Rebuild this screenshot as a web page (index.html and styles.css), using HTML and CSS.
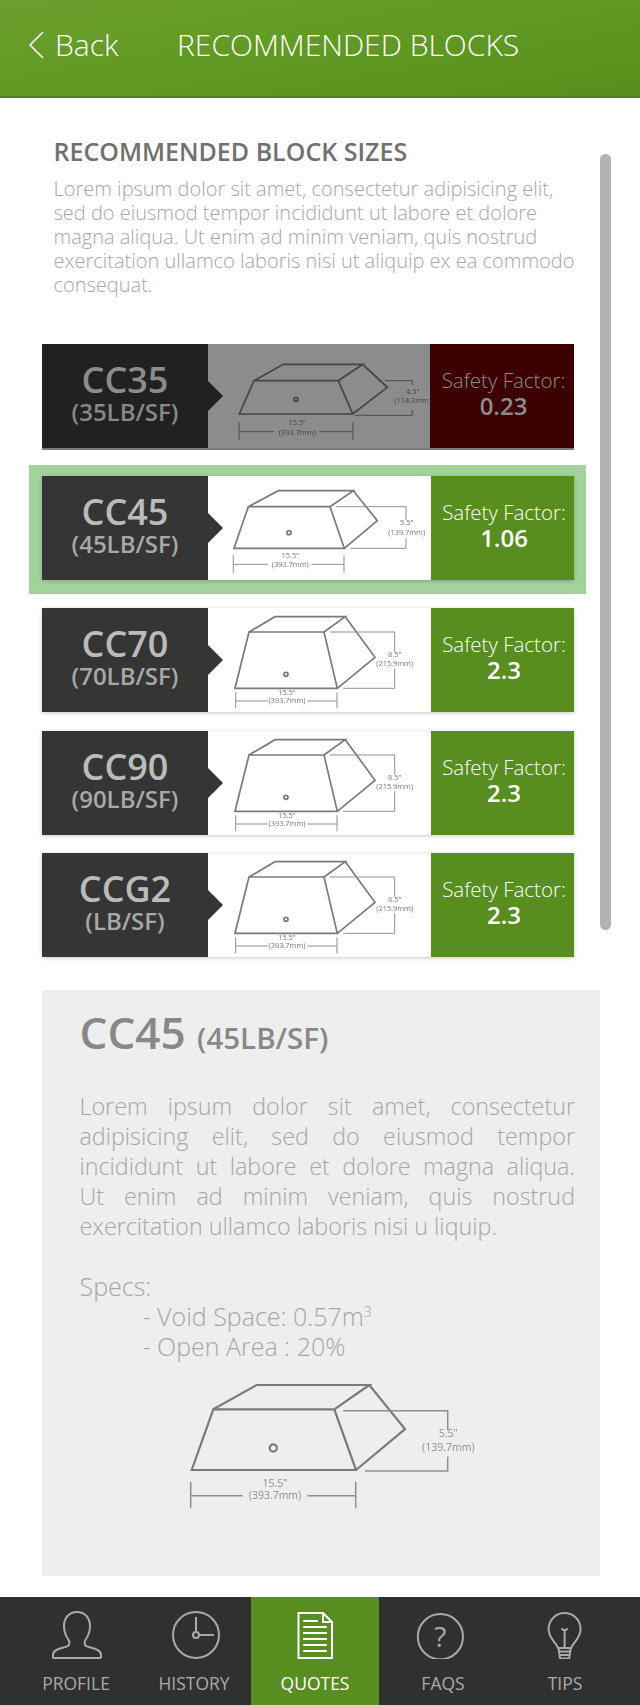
FILE: index.html
```html
<!DOCTYPE html>
<html lang="en">
<head>
<meta charset="utf-8">
<title>Recommended Blocks</title>
<link rel="stylesheet" href="styles.css">
</head>
<body>
<div class="app">
  <header class="topbar">
    <svg class="chevron" viewBox="0 0 16 28" width="16" height="28"><path d="M15 1 L2 14 L15 27"/></svg>
    <span class="back">Back</span>
    <h1 class="topbar-title">RECOMMENDED BLOCKS</h1>
  </header>

  <main class="content">
    <div class="scrollbar"></div>
    <h2 class="intro-title">RECOMMENDED BLOCK SIZES</h2>
    <p class="intro-text">Lorem ipsum dolor sit amet, consectetur adipisicing elit, sed do eiusmod tempor incididunt ut labore et dolore magna aliqua. Ut enim ad minim veniam, quis nostrud exercitation ullamco laboris nisi ut aliquip ex ea commodo consequat.</p>

    <section class="rows">
      <article class="row row--unsafe">
        <div class="row-name"><span class="row-code">CC35</span><span class="row-weight">(35LB/SF)</span></div>
        <div class="row-figure">
          <svg class="fig" viewBox="0 0 225 104" width="225" height="104">
            <path class="fig-line" d="M28.3 70 L43 36.7 H127.3 L141.7 70 Z M43 36.7 L72.3 20.3 H151.7 L127.3 36.7 M151.7 20.3 L176.3 43.3 L141.7 70"/>
            <circle class="fig-line" cx="85" cy="55.3" r="2"/>
            <path class="fig-dim" d="M174 36.7 H201.3 V41 M201.3 66 V71.3 H144 M28 78.3 V96 M142 78.3 V96 M28 87.7 H63 M108.3 87.7 H142"/>
            <text class="fig-text" x="86.3" y="81">15.5"</text>
            <text class="fig-text" x="86.3" y="91">(393.7mm)</text>
            <text class="fig-text" x="201.7" y="50">4.5"</text>
            <text class="fig-text" x="201.7" y="59.3">(114.3mm)</text>
          </svg>
        </div>
        <div class="row-score"><span class="score-label">Safety Factor:</span><span class="score-value">0.23</span></div>
      </article>

      <div class="row-selected">
        <article class="row">
          <div class="row-name"><span class="row-code">CC45</span><span class="row-weight">(45LB/SF)</span></div>
          <div class="row-figure">
            <svg class="fig" viewBox="0 0 225 104" width="225" height="104">
              <path class="fig-line" d="M23 72.3 L37.3 30.7 H119 L133.3 72.3 Z M37.3 30.7 L67.3 14.7 H142.3 L119 30.7 M142.3 14.7 L166.3 44.7 L133.3 72.3"/>
              <circle class="fig-line" cx="78" cy="56.7" r="2"/>
              <path class="fig-dim" d="M125 30.7 H195 V44 M195 62 V72.3 H139.7 M22.3 79 V96.7 M133 79 V96.7 M22.3 88.3 H57.3 M100.7 88.3 H133"/>
              <text class="fig-text" x="79.3" y="82">15.5"</text>
              <text class="fig-text" x="79.3" y="91">(393.7mm)</text>
              <text class="fig-text" x="195.7" y="49">5.5"</text>
              <text class="fig-text" x="195.7" y="58.7">(139.7mm)</text>
            </svg>
          </div>
          <div class="row-score"><span class="score-label">Safety Factor:</span><span class="score-value">1.06</span></div>
        </article>
      </div>

      <article class="row">
        <div class="row-name"><span class="row-code">CC70</span><span class="row-weight">(70LB/SF)</span></div>
        <div class="row-figure">
          <svg class="fig" viewBox="0 0 225 104" width="225" height="104">
            <path class="fig-line" d="M24 80.3 L38 24 H113 L126.3 80.3 Z M38 24 L64 8.7 H134.3 L113 24 M134.3 8.7 L164 49.3 L126.3 80.3"/>
            <circle class="fig-line" cx="75" cy="66.3" r="2"/>
            <path class="fig-dim" d="M119 24 H183.7 V43.7 M183.7 60.3 V80.3 H132.3 M24.7 84.3 V100.3 M126 84.3 V100.3 M24.7 93 H56.7 M96.3 93 H126"/>
            <text class="fig-text" x="76" y="87">15.5"</text>
            <text class="fig-text" x="76" y="95.3">(393.7mm)</text>
            <text class="fig-text" x="183.7" y="49.3">8.5"</text>
            <text class="fig-text" x="183.7" y="57.7">(215.9mm)</text>
          </svg>
        </div>
        <div class="row-score"><span class="score-label">Safety Factor:</span><span class="score-value">2.3</span></div>
      </article>

      <article class="row row--offset">
        <div class="row-name"><span class="row-code">CC90</span><span class="row-weight">(90LB/SF)</span></div>
        <div class="row-figure">
          <svg class="fig" viewBox="0 0 225 104" width="225" height="104">
            <path class="fig-line" d="M24 80.3 L38 24 H113 L126.3 80.3 Z M38 24 L64 8.7 H134.3 L113 24 M134.3 8.7 L164 49.3 L126.3 80.3"/>
            <circle class="fig-line" cx="75" cy="66.3" r="2"/>
            <path class="fig-dim" d="M119 24 H183.7 V43.7 M183.7 60.3 V80.3 H132.3 M24.7 84.3 V100.3 M126 84.3 V100.3 M24.7 93 H56.7 M96.3 93 H126"/>
            <text class="fig-text" x="76" y="87">15.5"</text>
            <text class="fig-text" x="76" y="95.3">(393.7mm)</text>
            <text class="fig-text" x="183.7" y="49.3">8.5"</text>
            <text class="fig-text" x="183.7" y="57.7">(215.9mm)</text>
          </svg>
        </div>
        <div class="row-score"><span class="score-label">Safety Factor:</span><span class="score-value">2.3</span></div>
      </article>

      <article class="row">
        <div class="row-name"><span class="row-code">CCG2</span><span class="row-weight">(LB/SF)</span></div>
        <div class="row-figure">
          <svg class="fig" viewBox="0 0 225 104" width="225" height="104">
            <path class="fig-line" d="M24 80.3 L38 24 H113 L126.3 80.3 Z M38 24 L64 8.7 H134.3 L113 24 M134.3 8.7 L164 49.3 L126.3 80.3"/>
            <circle class="fig-line" cx="75" cy="66.3" r="2"/>
            <path class="fig-dim" d="M119 24 H183.7 V43.7 M183.7 60.3 V80.3 H132.3 M24.7 84.3 V100.3 M126 84.3 V100.3 M24.7 93 H56.7 M96.3 93 H126"/>
            <text class="fig-text" x="76" y="87">15.5"</text>
            <text class="fig-text" x="76" y="95.3">(393.7mm)</text>
            <text class="fig-text" x="183.7" y="49.3">8.5"</text>
            <text class="fig-text" x="183.7" y="57.7">(215.9mm)</text>
          </svg>
        </div>
        <div class="row-score"><span class="score-label">Safety Factor:</span><span class="score-value">2.3</span></div>
      </article>
    </section>

    <section class="detail">
      <h3 class="detail-title">CC45 <small class="detail-weight">(45LB/SF)</small></h3>
      <p class="detail-text">
        <span class="detail-line">Lorem ipsum dolor sit amet, consectetur</span>
        <span class="detail-line">adipisicing elit, sed do eiusmod tempor</span>
        <span class="detail-line">incididunt ut labore et dolore magna aliqua.</span>
        <span class="detail-line">Ut enim ad minim veniam, quis nostrud</span>
        <span class="detail-line detail-line--last">exercitation ullamco laboris nisi u liquip.</span>
      </p>
      <div class="specs">
        <div>Specs:</div>
        <div class="spec-item">- Void Space: 0.57m<sup class="spec-sup">3</sup></div>
        <div class="spec-item">- Open Area : 20%</div>
      </div>
      <svg class="detail-fig" viewBox="0 0 300 140" width="300" height="140">
        <path class="fig-line fig-line--big" d="M11.7 95 L33.3 34.3 H154.3 L176 95 Z M33.3 34.3 L76.7 10 H189.3 L154.3 34.3 M189.3 10 L225 54 L176 95"/>
        <circle class="fig-line fig-line--big" cx="93.3" cy="73" r="3.6"/>
        <path class="fig-dim fig-dim--big" d="M163.3 35.7 H267.7 V55 M267.7 81.7 V96 H185 M10.7 106.7 V133.3 M175.7 106.7 V133.3 M10.7 120.7 H62.7 M127.3 120.7 H175.7"/>
        <text class="fig-text fig-text--big" x="95" y="111.7">15.5"</text>
        <text class="fig-text fig-text--big" x="95" y="124">(393.7mm)</text>
        <text class="fig-text fig-text--big" x="268.3" y="62">5.5"</text>
        <text class="fig-text fig-text--big" x="268.3" y="75.7">(139.7mm)</text>
      </svg>
    </section>
  </main>

  <nav class="tabbar">
    <a class="tab">
      <svg class="tab-icon" viewBox="0 0 60 48" width="60" height="48"><path d="M31 1 C23 1 18 7 18 15 C18 21 20 25 22 28 C24 31 24 33 22 35 C19 37 7 37 7 44 V46 Q7 47 8 47 H54 Q55 47 55 46 V44 C55 37 43 37 40 35 C38 33 38 31 40 28 C42 25 44 21 44 15 C44 7 39 1 31 1 Z"/></svg>
      <span class="tab-label">PROFILE</span>
    </a>
    <a class="tab">
      <svg class="tab-icon" viewBox="0 0 60 48" width="60" height="48"><circle cx="32" cy="24" r="23"/><circle cx="32" cy="24" r="3"/><path d="M32 6 V21 M35 24 H50"/></svg>
      <span class="tab-label">HISTORY</span>
    </a>
    <a class="tab tab--active">
      <svg class="tab-icon" viewBox="0 0 60 48" width="60" height="48"><path d="M13.5 2 H38 L47 11 V47 H13.5 Z M38 2 V11 H47 M18 10 H33 M18 16 H42 M18 22 H42 M18 28 H42 M18 34 H42 M18 40 H42"/></svg>
      <span class="tab-label">QUOTES</span>
    </a>
    <a class="tab">
      <svg class="tab-icon" viewBox="0 0 60 48" width="60" height="48"><circle cx="27.4" cy="25.7" r="22.6"/><text class="tab-glyph" x="27.4" y="36">?</text></svg>
      <span class="tab-label">FAQS</span>
    </a>
    <a class="tab">
      <svg class="tab-icon" viewBox="0 0 60 48" width="60" height="48"><path d="M23 37 C22 32 13.6 28 13.6 18 A16 16 0 0 1 45.6 18 C45.6 28 37.2 32 36.2 37 Z M23.5 37 L25 47.5 H34.2 L35.7 37 M24 40.5 H35 M24.6 44 H34.6 M29.6 37 V20 M26.5 17.5 Q29.6 21 32.7 17.5"/></svg>
      <span class="tab-label">TIPS</span>
    </a>
  </nav>
</div>
</body>
</html>
```

FILE: styles.css
```css
* { box-sizing: border-box; }
html, body { margin: 0; padding: 0; }
body {
  width: 640px;
  height: 1705px;
  overflow: hidden;
  background: #fff;
  font-family: "Open Sans", "Liberation Sans", sans-serif;
}
.app { display: flex; flex-direction: column; height: 1705px; }

/* top bar */
.topbar {
  flex: none;
  display: flex;
  align-items: center;
  height: 98px;
  padding: 0 0 7px 28px;
  background: linear-gradient(170deg, #6c9f2e 0%, #619a23 45%, #578f1c 100%);
  border-bottom: 2px solid #4c7f17;
  color: #fff;
}
.chevron { flex: none; fill: none; stroke: #fff; stroke-width: 1.6; }
.back { margin-left: 11px; width: 122px; font-size: 30px; font-weight: 300; line-height: 40px; }
.topbar-title { margin: 0; font-size: 30px; font-weight: 300; line-height: 40px; white-space: nowrap; }

/* main area */
.content { position: relative; flex: 1; padding: 38px 0 0 42px; }
.scrollbar {
  position: absolute;
  left: 600px;
  top: 56px;
  width: 11px;
  height: 776px;
  border-radius: 6px;
  background: #b2b2b2;
}
.intro-title {
  margin: 0 0 0 11.5px;
  font-size: 25px;
  font-weight: 600;
  line-height: 30px;
  color: #707070;
}
.intro-text {
  width: 530px;
  margin: 11px 0 47px 11.5px;
  font-size: 20px;
  font-weight: 300;
  line-height: 24px;
  color: #a6a6a6;
}

/* block rows */
.rows { display: flex; flex-direction: column; gap: 18px; width: 532px; }
.row {
  position: relative;
  display: flex;
  width: 532px;
  height: 104px;
  background: #fff;
  box-shadow: 0 1px 4px rgba(0, 0, 0, .22);
}
.row--offset { margin-top: 1px; }
.row-selected {
  margin: -1px -12px -4px -13px;
  padding: 11px 12px 14px 13px;
  background: #a2d39c;
}
.row-name {
  position: relative;
  flex: none;
  display: flex;
  flex-direction: column;
  align-items: center;
  width: 166px;
  padding-top: 22px;
  background: #353535;
}
.row-name::after {
  content: "";
  position: absolute;
  left: 100%;
  top: 37px;
  border-style: solid;
  border-width: 15px 0 15px 15px;
  border-color: transparent transparent transparent #353535;
}
.row-code { font-size: 36px; font-weight: 600; line-height: 28px; color: #bbb; }
.row-weight { margin-top: 4px; font-size: 24px; font-weight: 600; line-height: 28px; color: #a8a8a8; }
.row-figure { flex: 1; overflow: hidden; background: #fff; }
.fig { display: block; margin-left: 3px; filter: blur(.3px); }
.fig-line { fill: none; stroke: #7a7a7a; stroke-width: 1.7; }
.fig-dim { fill: none; stroke: #8f8f8f; stroke-width: 1; }
.fig-text { font-size: 7.4px; fill: #777; text-anchor: middle; }
.row-score {
  flex: none;
  display: flex;
  flex-direction: column;
  align-items: center;
  width: 143px;
  padding: 23px 0 0 3px;
  background: #578e1f;
  color: #fff;
}
.score-label { font-size: 20.5px; font-weight: 300; line-height: 27px; white-space: nowrap; }
.score-value { font-size: 24px; font-weight: 600; line-height: 24px; }

/* dimmed first row */
.row--unsafe { box-shadow: 0 2px 0 #7c7c7c; }
.row--unsafe .row-name { background: #212121; }
.row--unsafe .row-name::after { border-left-color: #212121; }
.row--unsafe .row-code { color: #8c8c8c; }
.row--unsafe .row-weight { color: #888; }
.row--unsafe .row-figure { background: #8c8c8c; }
.row--unsafe .fig-line { stroke: #444; }
.row--unsafe .fig-dim { stroke: #4a4a4a; }
.row--unsafe .fig-text { fill: #444; }
.row--unsafe .row-score { width: 144px; background: #3d0000; color: #8c8c8c; }

/* detail panel */
.detail {
  width: 558px;
  height: 586px;
  margin-top: 33px;
  padding: 12px 25px 0 37.5px;
  background: #eee;
}
.detail-title { margin: 0; font-size: 44px; font-weight: 600; line-height: 60px; color: #888; }
.detail-weight { font-size: 29.5px; font-weight: 600; line-height: 1; }
.detail-text {
  margin: 29px 0 30px;
  font-size: 23.3px;
  font-weight: 300;
  line-height: 30px;
  color: #a6a6a6;
}
.detail-line { display: block; text-align: justify; text-align-last: justify; white-space: nowrap; }
.detail-line--last { text-align-last: left; }
.specs { font-size: 25px; font-weight: 300; line-height: 30px; color: #a6a6a6; }
.spec-item { padding-left: 63px; }
.spec-sup { font-size: 14px; line-height: 0; }
.detail-fig { display: block; margin: 14px 0 0 100px; filter: blur(.3px); }
.fig-line--big { stroke-width: 2.2; }
.fig-dim--big { stroke-width: 1.5; }
.fig-text--big { font-size: 10.5px; fill: #8f8f8f; font-weight: 500; }

/* bottom tabs */
.tabbar {
  flex: none;
  display: grid;
  grid-template-columns: 122px 114px 128px 128px 116px;
  height: 108px;
  padding: 0 17px 0 15px;
  background: #303030;
}
.tab {
  display: flex;
  flex-direction: column;
  align-items: center;
  padding-top: 14px;
  color: #aaa;
}
.tab--active { background: #578e1f; color: #fff; }
.tab-icon { flex: none; fill: none; stroke: #aaa; stroke-width: 2; }
.tab--active .tab-icon { stroke: #fff; }
.tab-glyph { font-size: 28px; font-weight: 400; fill: #aaa; stroke: none; text-anchor: middle; }
.tab-label { margin-top: 13px; font-size: 17.5px; font-weight: 400; line-height: 22px; }
```
